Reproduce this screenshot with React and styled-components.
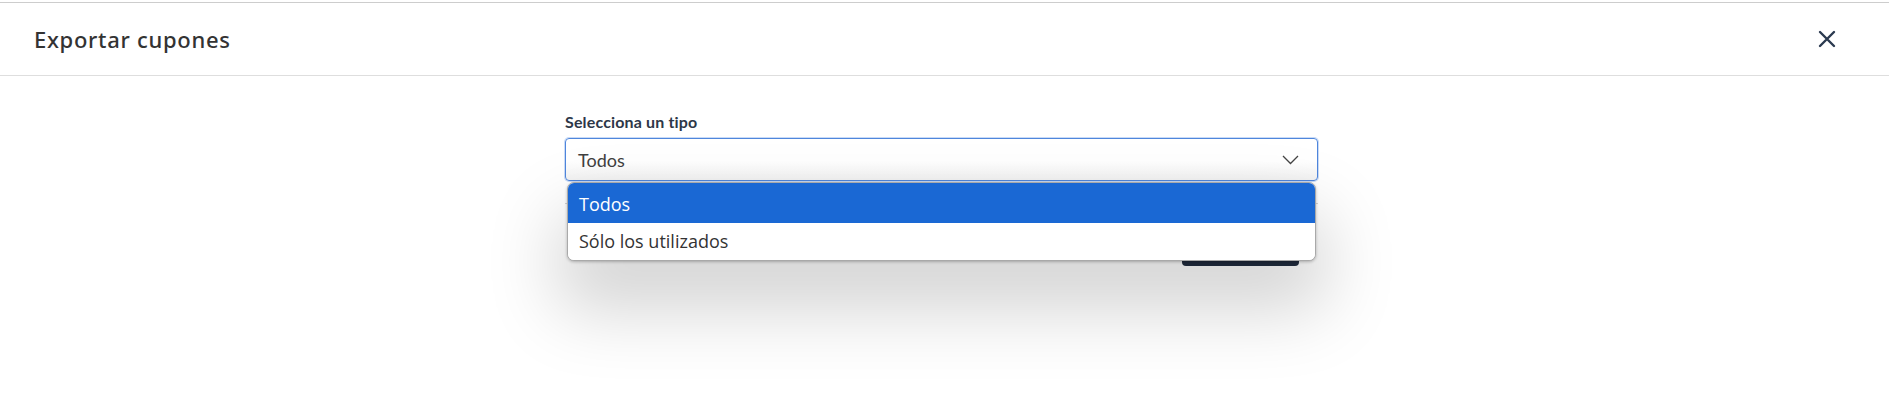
import React from "react";
import styled, { createGlobalStyle } from "styled-components";

const GlobalStyle = createGlobalStyle`
  html, body { margin: 0; padding: 0; background: #ffffff; }
  body { font-family: "Lato", "Noto Sans", sans-serif; }
`;

const Page = styled.div`
  padding-top: 2px;
  min-height: 407px;
`;

const Modal = styled.div`
  border-top: 1px solid #cdcdcd;
`;

const Header = styled.header`
  height: 73px;
  box-sizing: border-box;
  border-bottom: 1px solid #dedede;
  display: flex;
  align-items: center;
  justify-content: space-between;
  padding: 0 53px 0 34px;
`;

const Title = styled.h2`
  margin: 0;
  font-family: "Noto Sans", "Open Sans", sans-serif;
  font-weight: 500;
  font-size: 22px;
  color: #333333;
  letter-spacing: 0.7px;
`;

const CloseButton = styled.button`
  border: 0;
  background: none;
  padding: 0;
  width: 18px;
  height: 18px;
  display: flex;
  cursor: pointer;
`;

const Body = styled.div`
  display: flex;
  justify-content: center;
  padding: 36px 6px 0 0;
`;

const Form = styled.div`
  width: 753px;
  display: flex;
  flex-direction: column;
`;

const Label = styled.label`
  font-family: "Lato", sans-serif;
  font-weight: 700;
  font-size: 16px;
  line-height: 20px;
  letter-spacing: 0.15px;
  color: #2d3748;
  margin-bottom: 6px;
`;

const SelectWrap = styled.div`
  position: relative;
`;

const SelectBox = styled.div`
  height: 43px;
  box-sizing: border-box;
  border: 1px solid #4f86dc;
  border-radius: 4px;
  box-shadow: 0 0 0 1px #c9dbf7;
  background: linear-gradient(#ffffff 55%, #f2f2f2);
  display: flex;
  align-items: center;
  justify-content: space-between;
  padding: 0 18px 0 12px;
  font-family: "Lato", sans-serif;
  font-size: 18px;
  color: #404040;
`;

const Menu = styled.ul`
  position: absolute;
  top: 44px;
  left: 2px;
  right: 2px;
  margin: 0;
  padding: 0;
  list-style: none;
  background: #ffffff;
  border: 1px solid #a9a9a9;
  border-radius: 7px;
  overflow: hidden;
  box-shadow: 0 1px 3px rgba(0, 0, 0, 0.25), 0 40px 70px 10px rgba(0, 0, 0, 0.17);
  z-index: 2;
`;

const Option = styled.li`
  height: ${(p) => (p.$first ? "38px" : "35px")};
  display: flex;
  align-items: center;
  padding: ${(p) => (p.$first ? "2px 11px 0" : "0 11px 2px")};
  font-family: "Open Sans", "Noto Sans", sans-serif;
  font-size: 18px;
  background: ${(p) => (p.$active ? "#1a68d4" : "#ffffff")};
  color: ${(p) => (p.$active ? "#ffffff" : "#333333")};
`;

const Divider = styled.div`
  height: 1px;
  background: #d6d6d6;
  margin-top: 22px;
`;

const Actions = styled.div`
  display: flex;
  justify-content: flex-end;
  padding-right: 19px;
  margin-top: 22px;
`;

const SubmitButton = styled.button`
  width: 117px;
  height: 40px;
  border: 0;
  border-radius: 4px;
  background: #212d3f;
  color: #ffffff;
  font-family: "Lato", sans-serif;
  font-size: 15px;
`;

export default function App() {
  return (
    <>
      <GlobalStyle />
      <Page>
        <Modal>
          <Header>
            <Title>Exportar cupones</Title>
            <CloseButton aria-label="Cerrar">
              <svg width="18" height="18" viewBox="0 0 18 18">
                <path d="M2 2 L16 16 M16 2 L2 16" stroke="#2b3a50" strokeWidth="2.4" strokeLinecap="round" fill="none" />
              </svg>
            </CloseButton>
          </Header>
          <Body>
            <Form>
              <Label>Selecciona un tipo</Label>
              <SelectWrap>
                <SelectBox>
                  <span>Todos</span>
                  <svg width="17" height="10" viewBox="0 0 17 10">
                    <path d="M1 1 L8.5 8.5 L16 1" stroke="#444" strokeWidth="1.3" fill="none" />
                  </svg>
                </SelectBox>
                <Menu>
                  <Option $active $first>Todos</Option>
                  <Option>Sólo los utilizados</Option>
                </Menu>
              </SelectWrap>
              <Divider />
              <Actions>
                <SubmitButton>Exportar</SubmitButton>
              </Actions>
            </Form>
          </Body>
        </Modal>
      </Page>
    </>
  );
}
